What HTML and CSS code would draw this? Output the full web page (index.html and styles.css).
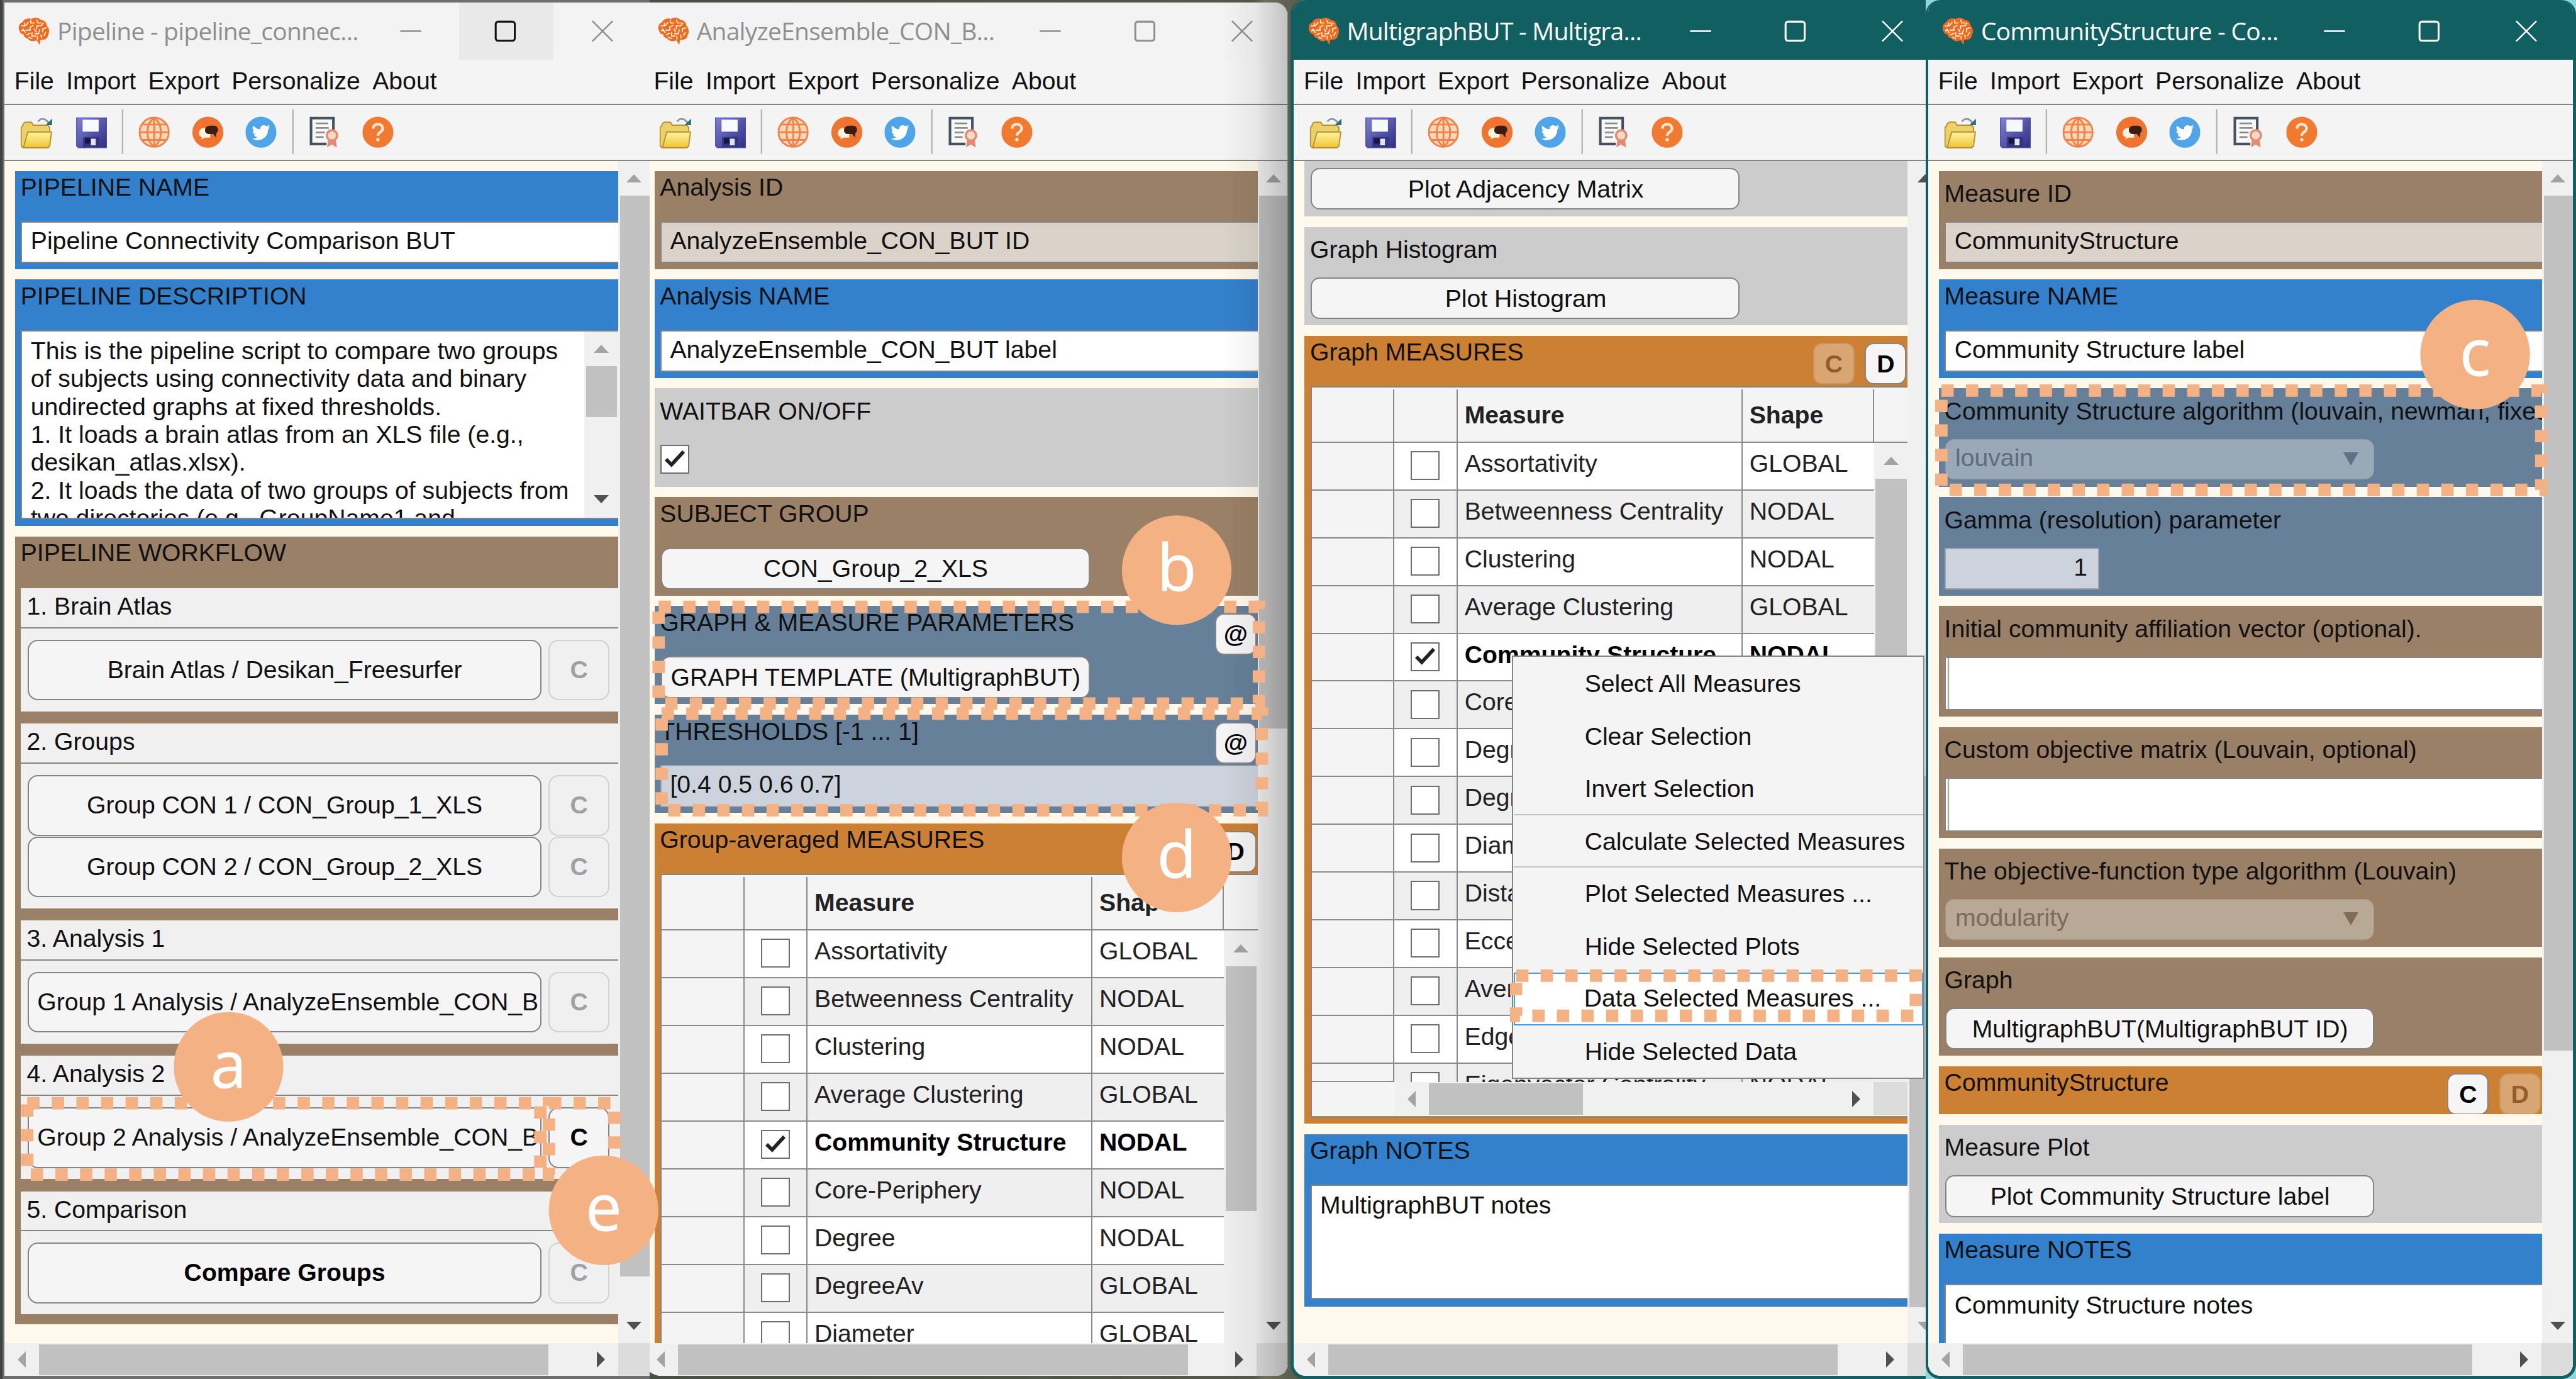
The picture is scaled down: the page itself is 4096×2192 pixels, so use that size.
FILE: index.html
```html
<!DOCTYPE html>
<html lang="en">
<head>
<meta charset="utf-8">
<title>BRAPH pipeline windows</title>
<link rel="stylesheet" href="styles.css">
</head>
<body>
<svg class="defs" width="0" height="0" aria-hidden="true">
  <defs>
    <linearGradient id="g-folder" x1="0" y1="0" x2="0" y2="1"><stop offset="0" stop-color="#fff3a0"/><stop offset="1" stop-color="#efc435"/></linearGradient>
    <linearGradient id="g-disk" x1="0" y1="0" x2="1" y2="1"><stop offset="0" stop-color="#7f7fd6"/><stop offset="1" stop-color="#2d2d84"/></linearGradient>
  </defs>
  <symbol id="i-brain" viewBox="0 0 52 46">
    <path fill="#f26a1b" d="M3 24C-1 18 1 10 7 8C9 2 17 0 22 2C28-1 35 0 38 4C44 4 48 9 48 14C52 17 53 25 50 29C50 34 45 38 40 37L37 38L36 46L31 38C25 41 18 39 16 35C11 34 9 31 9 28C6 28 4 27 3 24Z"/>
    <path fill="none" stroke="#fff" stroke-width="1.7" stroke-linecap="round" d="M5 14H11V9M13 13L17 8M21 4V9H27M25 13L20 16V21H13M8 19L12 25M31 4L33 9H39M42 9L38 14H31V19M27 19L30 24M47 17L41 19V24M36 20L34 27H28M46 25L43 30M38 29L39 34M14 29L20 26M23 25V31H29M18 33L23 35M32 31V36M6 22L9 21"/>
  </symbol>
  <symbol id="i-open" viewBox="0 0 52 52">
    <path fill="#ecd06a" stroke="#b8932c" stroke-width="2" d="M1 48V18L4 14L5 11L8 9H18L21 14H45L48 18V48L45 51H4Z"/>
    <path fill="url(#g-folder)" stroke="#b8932c" stroke-width="2" d="M5 50L12 25H51L48 48L45 51H6Z"/>
    <path fill="none" stroke="#8d93a8" stroke-width="3" d="M29 8C33 2 41 2 46 10"/>
    <path fill="#2f6f78" d="M52 3V14H41Z"/>
  </symbol>
  <symbol id="i-save" viewBox="0 0 52 52">
    <path fill="url(#g-disk)" stroke="#4a4aa6" stroke-width="1.5" d="M1 1H51V51H4L1 48Z"/>
    <path fill="#f7f9ff" d="M11 4H38V24H11Z"/>
    <path fill="#34347c" d="M12 33H39V50H12Z"/>
    <path fill="#dfe6fb" d="M25 36H33V47H25Z"/>
    <path fill="#15153f" d="M15 35H24V44H15Z"/>
  </symbol>
  <symbol id="i-web" viewBox="0 0 52 52">
    <circle cx="26" cy="26" r="24.5" fill="#fbd9b8" stroke="#f0834a" stroke-width="3"/>
    <path fill="none" stroke="#f0834a" stroke-width="3" d="M26 2V50M2 26H50M6 13H46M6 39H46M26 2C11 12 11 40 26 50M26 2C41 12 41 40 26 50"/>
  </symbol>
  <symbol id="i-forum" viewBox="0 0 52 52">
    <circle cx="26" cy="26" r="26" fill="#ee7430"/>
    <path fill="#fff3df" d="M19 19C9 20 9 33 16 34L15 38L21 35H30V20Z"/>
    <path fill="#3c1d10" d="M29 15C19 16 19 28 27 29H35L40 35V28C45 24 44 15 36 15Z"/>
  </symbol>
  <symbol id="i-bird" viewBox="0 0 52 52">
    <circle cx="26" cy="26" r="26" fill="#4fa5e8"/>
    <path fill="#fff" d="M41 17C40 18 39 18 37 18C39 17 40 16 40 14C38 15 37 15 35 16C31 12 24 15 25 21C20 21 16 18 13 15C11 18 12 22 15 24C14 24 13 24 12 23C12 27 14 29 17 30H14C15 33 17 34 20 34C18 36 14 37 11 37C22 43 38 37 38 21C39 20 40 19 41 17Z"/>
  </symbol>
  <symbol id="i-license" viewBox="0 0 52 54">
    <path fill="#f8f8f8" stroke="#44525f" stroke-width="4.5" d="M30 48H3V3H42V28"/>
    <path fill="none" stroke="#8d8d8d" stroke-width="3" d="M11 12H33M11 20H34M11 28H27M11 36H25"/>
    <path fill="#e58b72" d="M33 38L31 54L39 49L48 54L46 38Z"/>
    <circle cx="39.500" cy="33" r="9" fill="#f6d8c8" stroke="#e58b72" stroke-width="4"/>
  </symbol>
  <symbol id="i-help" viewBox="0 0 52 52">
    <circle cx="26" cy="26" r="26" fill="#f07a30"/>
    <path fill="none" stroke="#fde6d2" stroke-width="4.500" d="M18 20C18 10 34 10 34 20C34 26 26 25 26 32"/>
    <circle cx="26" cy="38.500" r="2.800" fill="#fde6d2"/>
  </symbol>
  <symbol id="i-controls" viewBox="0 0 400 96">
    <path fill="none" stroke="currentColor" stroke-width="2.600" d="M12 48H47M334 31L368 65M368 31L334 65"/>
    <rect x="172" y="32" width="32" height="32" rx="4" fill="none" stroke="var(--max, currentColor)" stroke-width="3.200"/>
  </symbol>
  <symbol id="i-tools" viewBox="0 0 700 92">
    <use href="#i-open" x="27" y="19" width="53" height="54"/>
    <use href="#i-save" x="120" y="20" width="52" height="53"/>
    <path stroke="#b4b4b4" stroke-width="2.500" d="M198 7V82M483.500 7V82"/>
    <use href="#i-web" x="225" y="19" width="52" height="53"/>
    <use href="#i-forum" x="315" y="19" width="52" height="53"/>
    <use href="#i-bird" x="404" y="19" width="52" height="53"/>
    <use href="#i-license" x="511" y="17" width="50" height="56"/>
    <use href="#i-help" x="600" y="19" width="52" height="53"/>
  </symbol>
  <symbol id="i-check" viewBox="0 0 48 48"><path fill="none" stroke="#222" stroke-width="6.500" d="M8 24L18 34L40 10"/></symbol>
</svg>

<main class="desktop">

  <section class="window win-pipeline">
    <div class="client">
      <header class="titlebar"><svg class="brain"><use href="#i-brain"/></svg><h1 class="title">Pipeline - pipeline_connec...</h1><svg class="controls"><use href="#i-controls"/></svg></header>
      <nav class="menubar"><span>File</span><span>Import</span><span>Export</span><span>Personalize</span><span>About</span></nav>
      <div class="toolbar"><svg class="tools"><use href="#i-tools"/></svg></div>
      <div class="view">
        <div class="content">
          <div class="panel blue"><div class="head">PIPELINE NAME</div><div class="field">Pipeline Connectivity Comparison BUT</div></div>
          <div class="panel blue panel-desc"><div class="head">PIPELINE DESCRIPTION</div>
            <div class="field area desc">
              <p class="desc-text">This is the pipeline script to compare two groups<br>of subjects using connectivity data and binary<br>undirected graphs at fixed thresholds.<br>1. It loads a brain atlas from an XLS file (e.g.,<br>desikan_atlas.xlsx).<br>2. It loads the data of two groups of subjects from<br>two directories (e.g., GroupName1 and</p>
              <div class="vscroll inner"><i class="up"></i><b class="thumb"></b><i class="down dark"></i></div>
            </div>
          </div>
          <div class="panel brown panel-flow"><div class="head">PIPELINE WORKFLOW</div>
            <div class="steps">
              <div class="step"><div class="step-name">1. Brain Atlas</div><div class="pair"><div class="btn">Brain Atlas / Desikan_Freesurfer</div><div class="btn mark off">C</div></div></div>
              <div class="step"><div class="step-name">2. Groups</div><div class="pair"><div class="btn">Group CON 1 / CON_Group_1_XLS</div><div class="btn mark off">C</div></div><div class="pair"><div class="btn">Group CON 2 / CON_Group_2_XLS</div><div class="btn mark off">C</div></div></div>
              <div class="step"><div class="step-name">3. Analysis 1</div><div class="pair"><div class="btn long">Group 1 Analysis / AnalyzeEnsemble_CON_B</div><div class="btn mark off">C</div></div></div>
              <div class="step"><div class="step-name">4. Analysis 2</div><div class="pair"><div class="btn long">Group 2 Analysis / AnalyzeEnsemble_CON_B</div><div class="btn mark">C</div></div></div>
              <div class="step"><div class="step-name">5. Comparison</div><div class="pair"><div class="btn strong">Compare Groups</div><div class="btn mark off">C</div></div></div>
            </div>
          </div>
        </div>
        <div class="vscroll"><i class="up"></i><b class="thumb"></b><i class="down dark"></i></div>
      </div>
      <div class="hscroll"><i class="left"></i><b class="thumb"></b><i class="right"></i><span class="corner"></span></div>
    </div>
  </section>

  <section class="window win-analysis">
    <div class="client">
      <header class="titlebar"><svg class="brain"><use href="#i-brain"/></svg><h1 class="title">AnalyzeEnsemble_CON_B...</h1><svg class="controls"><use href="#i-controls"/></svg></header>
      <nav class="menubar"><span>File</span><span>Import</span><span>Export</span><span>Personalize</span><span>About</span></nav>
      <div class="toolbar"><svg class="tools"><use href="#i-tools"/></svg></div>
      <div class="view">
        <div class="content">
          <div class="panel brown"><div class="head">Analysis ID</div><div class="field pale">AnalyzeEnsemble_CON_BUT ID</div></div>
          <div class="panel blue"><div class="head">Analysis NAME</div><div class="field">AnalyzeEnsemble_CON_BUT label</div></div>
          <div class="panel gray"><div class="head low">WAITBAR ON/OFF</div><div class="check wait"><svg><use href="#i-check"/></svg></div></div>
          <div class="panel brown"><div class="head">SUBJECT GROUP</div><div class="btn wide">CON_Group_2_XLS</div></div>
          <div class="panel slate"><div class="head">GRAPH &amp; MEASURE PARAMETERS<span class="btn mini">@</span></div><div class="btn wide">GRAPH TEMPLATE (MultigraphBUT)</div></div>
          <div class="panel slate"><div class="head">THRESHOLDS [-1 ... 1]<span class="btn mini">@</span></div><div class="field ice">[0.4 0.5 0.6 0.7]</div></div>
          <div class="panel orange panel-table"><div class="head">Group-averaged MEASURES<span class="btn mini">D</span></div>
            <div class="table">
              <div class="row thead"><span></span><span></span><span>Measure</span><span>Shape</span></div>
              <div class="tbody">
                <div class="rows">
                  <div class="row"><span></span><span><i class="check"></i></span><span>Assortativity</span><span>GLOBAL</span></div>
                  <div class="row"><span></span><span><i class="check"></i></span><span>Betweenness Centrality</span><span>NODAL</span></div>
                  <div class="row"><span></span><span><i class="check"></i></span><span>Clustering</span><span>NODAL</span></div>
                  <div class="row"><span></span><span><i class="check"></i></span><span>Average Clustering</span><span>GLOBAL</span></div>
                  <div class="row picked"><span></span><span><i class="check"><svg><use href="#i-check"/></svg></i></span><span>Community Structure</span><span>NODAL</span></div>
                  <div class="row"><span></span><span><i class="check"></i></span><span>Core-Periphery</span><span>NODAL</span></div>
                  <div class="row"><span></span><span><i class="check"></i></span><span>Degree</span><span>NODAL</span></div>
                  <div class="row"><span></span><span><i class="check"></i></span><span>DegreeAv</span><span>GLOBAL</span></div>
                  <div class="row"><span></span><span><i class="check"></i></span><span>Diameter</span><span>GLOBAL</span></div>
                </div>
                <div class="vscroll inner"><i class="up"></i><b class="thumb"></b></div>
              </div>
            </div>
          </div>
        </div>
        <div class="vscroll"><i class="up"></i><b class="thumb"></b><i class="down dark"></i></div>
      </div>
      <div class="hscroll"><i class="left"></i><b class="thumb"></b><i class="right"></i><span class="corner"></span></div>
    </div>
    <div class="edge-shade"></div>
  </section>

  <section class="window active win-graph">
    <div class="client">
      <header class="titlebar"><svg class="brain"><use href="#i-brain"/></svg><h1 class="title">MultigraphBUT - Multigra...</h1><svg class="controls"><use href="#i-controls"/></svg></header>
      <nav class="menubar"><span>File</span><span>Import</span><span>Export</span><span>Personalize</span><span>About</span></nav>
      <div class="toolbar"><svg class="tools"><use href="#i-tools"/></svg></div>
      <div class="view">
        <div class="content scrolled">
          <div class="panel gray panel-cut"><div class="btn wide">Plot Adjacency Matrix</div></div>
          <div class="panel gray"><div class="head low">Graph Histogram</div><div class="btn wide">Plot Histogram</div></div>
          <div class="panel orange panel-table"><div class="head">Graph MEASURES<span class="btn mini off">C</span><span class="btn mini">D</span></div>
            <div class="table">
              <div class="row thead"><span></span><span></span><span>Measure</span><span>Shape</span></div>
              <div class="tbody">
                <div class="rows">
                  <div class="row"><span></span><span><i class="check"></i></span><span>Assortativity</span><span>GLOBAL</span></div>
                  <div class="row"><span></span><span><i class="check"></i></span><span>Betweenness Centrality</span><span>NODAL</span></div>
                  <div class="row"><span></span><span><i class="check"></i></span><span>Clustering</span><span>NODAL</span></div>
                  <div class="row"><span></span><span><i class="check"></i></span><span>Average Clustering</span><span>GLOBAL</span></div>
                  <div class="row picked"><span></span><span><i class="check"><svg><use href="#i-check"/></svg></i></span><span>Community Structure</span><span>NODAL</span></div>
                  <div class="row"><span></span><span><i class="check"></i></span><span>Core-Periphery</span><span></span></div>
                  <div class="row"><span></span><span><i class="check"></i></span><span>Degree</span><span></span></div>
                  <div class="row"><span></span><span><i class="check"></i></span><span>DegreeAv</span><span></span></div>
                  <div class="row"><span></span><span><i class="check"></i></span><span>Diameter</span><span></span></div>
                  <div class="row"><span></span><span><i class="check"></i></span><span>Distance</span><span></span></div>
                  <div class="row"><span></span><span><i class="check"></i></span><span>Eccentricity</span><span></span></div>
                  <div class="row"><span></span><span><i class="check"></i></span><span>Average</span><span></span></div>
                  <div class="row"><span></span><span><i class="check"></i></span><span>Edge</span><span></span></div>
                  <div class="row"><span></span><span><i class="check"></i></span><span>Eigenvector Centrality</span><span>NODAL</span></div>
                </div>
                <div class="vscroll inner"><i class="up"></i><b class="thumb"></b></div>
              </div>
              <div class="tfoot"><span class="blank"></span><i class="left"></i><b class="thumb"></b><i class="right"></i><span class="corner"></span></div>
            </div>
          </div>
          <div class="panel blue panel-gnotes"><div class="head">Graph NOTES</div><div class="field area">MultigraphBUT notes</div></div>
        </div>
        <div class="vscroll"><i class="up dark"></i><b class="thumb"></b><i class="down"></i></div>
      </div>
      <div class="hscroll"><i class="left"></i><b class="thumb"></b><i class="right"></i><span class="corner"></span></div>
    </div>
  </section>

  <section class="window active win-measure">
    <div class="client">
      <header class="titlebar"><svg class="brain"><use href="#i-brain"/></svg><h1 class="title">CommunityStructure - Co...</h1><svg class="controls"><use href="#i-controls"/></svg></header>
      <nav class="menubar"><span>File</span><span>Import</span><span>Export</span><span>Personalize</span><span>About</span></nav>
      <div class="toolbar"><svg class="tools"><use href="#i-tools"/></svg></div>
      <div class="view">
        <div class="content">
          <div class="panel brown"><div class="head low">Measure ID</div><div class="field pale">CommunityStructure</div></div>
          <div class="panel blue"><div class="head">Measure NAME</div><div class="field">Community Structure label</div></div>
          <div class="panel slate"><div class="head low">Community Structure algorithm (louvain, newman, fixed)</div><div class="drop">louvain<i class="down"></i></div></div>
          <div class="panel slate"><div class="head low">Gamma (resolution) parameter</div><div class="field ice number">1</div></div>
          <div class="panel brown panel-vector"><div class="head low">Initial community affiliation vector (optional).</div><div class="field vector"></div></div>
          <div class="panel brown panel-vector"><div class="head low">Custom objective matrix (Louvain, optional)</div><div class="field vector"></div></div>
          <div class="panel brown"><div class="head low">The objective-function type algorithm (Louvain)</div><div class="drop tan">modularity<i class="down"></i></div></div>
          <div class="panel brown"><div class="head low">Graph</div><div class="btn wide">MultigraphBUT(MultigraphBUT ID)</div></div>
          <div class="panel orange panel-bar"><div class="head">CommunityStructure<span class="btn mini">C</span><span class="btn mini off">D</span></div></div>
          <div class="panel gray"><div class="head low">Measure Plot</div><div class="btn wide">Plot Community Structure label</div></div>
          <div class="panel blue panel-mnotes"><div class="head">Measure NOTES</div><div class="field area">Community Structure notes</div></div>
        </div>
        <div class="vscroll"><i class="up"></i><b class="thumb"></b><i class="down dark"></i></div>
      </div>
      <div class="hscroll"><i class="left"></i><b class="thumb"></b><i class="right"></i><span class="corner"></span></div>
    </div>
  </section>

  <div class="context-menu">
    <div>Select All Measures</div><div>Clear Selection</div><div class="sep">Invert Selection</div><div class="sep">Calculate Selected Measures</div><div>Plot Selected Measures ...</div><div>Hide Selected Plots</div><div class="hover">Data Selected Measures ...</div><div>Hide Selected Data</div>
  </div>

  <svg class="notes" viewBox="0 0 4317 2310">
    <g class="dash">
      <rect x="45.600" y="1848.300" width="860" height="119.500"/>
      <rect x="920" y="1848.300" width="109.500" height="119.500"/>
      <rect x="1103.800" y="1016.600" width="1006" height="162"/>
      <rect x="1108.800" y="1195.500" width="1006" height="162"/>
      <rect x="2540.800" y="1634.500" width="670" height="67.300"/>
      <rect x="3253.500" y="654.500" width="1005.300" height="166.200"/>
    </g>
    <g class="badge">
      <circle cx="383" cy="1787.300" r="91.800"/><text x="383" y="1822.500">a</text>
      <circle cx="1972" cy="955.300" r="91.800"/><text x="1972" y="989.500">b</text>
      <circle cx="4148" cy="594" r="91.800"/><text x="4148" y="629">c</text>
      <circle cx="1972" cy="1436.600" r="91.800"/><text x="1972" y="1470.500">d</text>
      <circle cx="1011.500" cy="2027.600" r="91.800"/><text x="1011.500" y="2062">e</text>
    </g>
  </svg>
</main>
</body>
</html>
```
FILE: styles.css
```css
* { box-sizing: border-box; }
html { overflow: hidden; background: #2e3530; }
body {
  margin: 0;
  width: 4317px;
  height: 2310px;
  overflow: hidden;
  zoom: 0.9488;
  font: 41.3px "Liberation Sans", Arial, sans-serif;
  color: #111;
  white-space: nowrap;
}
.defs { position: absolute; }
h1, p { margin: 0; font: inherit; }

.desktop {
  position: relative;
  display: flex;
  width: 4317px;
  height: 2310px;
  overflow: hidden;
  padding-left: 7px;
  background: linear-gradient(90deg, #3d4540 0, #55574a 2100px, #6f6f5c 2120px, #4d5145 2200px, #4d5145 3220px, #8fd6da 3220px);
}

/* Windows */
.window { position: relative; flex: none; height: 2310px; overflow: hidden; }
.client { display: flex; flex-direction: column; width: 1082px; height: 2305px; background: #f4f4f4; }
.win-pipeline { width: 1082px; padding-top: 4px; background: #6e6e6e; box-shadow: -3px 0 0 #6e6e6e; --max: #111; --thumb: 1811px; }
.win-pipeline .client, .win-analysis .client { height: 2301px; }
.win-analysis { width: 1070px; padding-top: 4px; margin-right: 4px; --thumb: 893px; }
.win-analysis .client { width: 1080.5px; margin-left: -10.5px; border-radius: 0 22px 20px 30px; overflow: hidden; }
.active { background: #125f61; color: #111; }
.win-graph { width: 1064px; padding-left: 5px; --thumb: 890px; border-radius: 24px 0 0 24px; }
.win-graph .client { border-radius: 20px 0 0 20px; overflow: hidden; }
.win-measure { width: 1090px; padding: 0 5px 0 4px; border-radius: 24px; --thumb: 1432px; }
.win-measure .client { width: 1081px; border-radius: 20px; overflow: hidden; }

.titlebar { display: flex; align-items: center; flex: none; height: 96px; background: #f3f3f3; color: #8f8f8f; }
.active .titlebar { height: 100px; padding-top: 4px; background: #125f61; color: #fff; }
.brain { width: 52px; height: 46px; margin-left: 24px; margin-right: 13px; }
.title { width: 552px; font: 41px "Open Sans", "Noto Sans", sans-serif; letter-spacing: -0.75px; line-height: 60px; }
.controls { width: 400px; height: 96px; flex: none; margin-left: 11px; }
.win-pipeline .controls { background: linear-gradient(90deg, transparent 111px, #e9e9e9 111px 269px, transparent 269px); }
.menubar { display: flex; flex: none; gap: 20.4px; height: 76.500px; padding-left: 17px; line-height: 72px; border-bottom: 2.6px solid #848484; }
.toolbar { flex: none; height: 93.500px; border-bottom: 2.600px solid #848484; }
.tools { display: block; width: 700px; height: 92px; }

.view { display: flex; flex: none; height: 1980px; background: #fff8ec; }
.content { display: flex; flex-direction: column; gap: 17.7px; flex: none; width: 1029px; height: 1980px; padding: 16.200px 0 0 18.300px; overflow: hidden; }
.content.scrolled { padding-top: 0; }

/* Scroll bars */
.vscroll { display: flex; flex-direction: column; flex: none; width: 53px; background: #f0f0f0; }
.vscroll .thumb { margin-left: 3px; width: 50px; height: var(--thumb); background: #c1c1c1; }
.vscroll .down { margin-top: auto; }
.up, .down { flex: none; display: flex; height: 58px; align-items: center; justify-content: center; color: #a3a3a3; }
.left, .right { flex: none; display: flex; width: 58px; align-items: center; justify-content: center; color: #a3a3a3; }
.up::before { content: ""; border: 13px solid transparent; border-top: 0; border-bottom: 14px solid currentColor; }
.down::before { content: ""; border: 13px solid transparent; border-bottom: 0; border-top: 14px solid currentColor; }
.left::before { content: ""; border: 14px solid transparent; border-left: 0; border-right: 14px solid currentColor; }
.right::before { content: ""; border: 14px solid transparent; border-right: 0; border-left: 14px solid currentColor; }
.dark, .right { color: #505050; }
.win-graph .view > .vscroll .up { width: 58px; }
.win-graph .view > .vscroll .down { width: 58px; }
.win-graph .view > .vscroll .thumb { margin-top: 972px; }
.hscroll { display: flex; flex: none; height: 55px; background: #f0f0f0; }
.hscroll .thumb { width: 854px; margin: 2px 0 1px; background: #c1c1c1; }
.hscroll .right { margin-left: auto; }
.corner { flex: none; width: 53px; background: #dcdcdc; }
.inner { width: 57px; }
.inner .thumb { width: 52px; }

/* Property panels */
.panel { flex: none; height: 164.600px; overflow: hidden; }
.blue { background: #3380cc; }
.brown { background: #998066; }
.gray { background: #cccccc; }
.orange { background: #cc8033; }
.slate { background: #668099; }
.head { display: flex; height: 84.500px; padding: 4.500px 0 0 9.200px; line-height: 46.700px; }
.head.low { padding-top: 15px; }
.field { height: 70px; margin-left: 10px; padding-left: 14px; line-height: 62px; background: #fff; border: 2.600px solid #858585; border-right: 0; }
.pale { background: #dbd3ca; }
.ice { background: #ccd3dc; border-color: #9aa3ad; }
.area { line-height: 46.700px; padding-top: 10px; white-space: normal; overflow: hidden; }
.number { width: 259px; padding-right: 18px; text-align: right; border-right: 2.600px solid #9aa3ad; }
.btn { display: flex; flex: none; align-items: center; justify-content: center; background: #f5f5f5; border: 2.600px solid #858585; border-radius: 15px; overflow: hidden; }
.wide { width: 719px; height: 70px; margin-left: 10.500px; padding: 1.500px 0 0 1.500px; }
.mark { font-weight: bold; color: #000; }
.mini { width: 69.500px; height: 69.500px; margin: 7.500px 2px 0 0; padding-top: 2px; font-weight: bold; color: #000; }
.mini:first-of-type { margin-left: auto; }
.mini + .mini { margin-left: 15.500px; }
.mini.off { background: #d9a673; border-color: #c8935f; color: #905c28; }
.drop { display: flex; justify-content: space-between; width: 719px; height: 68px; margin-left: 10.500px; padding-left: 16px; padding-right: 12px; line-height: 62px; border-radius: 15px; background: #99a9b8; border: 2px solid #8c9dae; color: #5d6d7d; }
.drop .down { width: 52px; height: 65px; color: #5f7183; }
.drop .down::before { border-top-width: 23px; }
.drop.tan { background: #b8a896; border-color: #a8967f; color: #7b6b5b; }
.drop.tan .down { color: #7f6c58; }
.check { display: block; width: 48.500px; height: 48.500px; background: #fff; border: 2.600px solid #6e6e6e; }
.check svg { display: block; width: 100%; height: 100%; }
.wait { margin: 10px 0 0 10px; }

.panel-desc { height: 413px; }
.desc { display: flex; height: 317px; padding-top: 0; }
.desc-text { width: 927px; height: 312px; overflow: hidden; padding-top: 10px; line-height: 46.700px; }
.desc .vscroll { margin-left: auto; --thumb: 86px; }
.desc .down { height: 62px; margin-bottom: 0; }
.desc .vscroll { height: 312px; }
.panel-flow { height: 1319px; }
.steps { display: flex; flex-direction: column; gap: 20.500px; margin: 2px 0 0 9px; }
.step { height: 206.400px; background: #f0f0f0; }
.step:nth-child(2) { height: 309px; }
.step-name { height: 67px; margin-bottom: 19px; padding-left: 10.500px; line-height: 62px; border-bottom: 2.600px solid #858585; }
.pair { display: flex; gap: 11.500px; height: 102px; margin-left: 12px; margin-bottom: 1px; }
.pair .btn { width: 861.500px; border-radius: 17px; padding-bottom: 1px; }
.pair .mark { width: 102px; }
.pair .long { justify-content: flex-start; padding-left: 14px; }
.pair .off { background: #f0f0f0; border-color: #d2d2d2; color: #a0a0a0; }
.strong { font-weight: bold; color: #000; }

.panel-vector { height: 185.500px; }
.vector { height: 90px; border-left: 2.600px solid #858585; box-shadow: inset 3px 0 0 #fff, inset 5.500px 0 0 #a5a5a5; }
.panel-bar { height: 80.700px; }
.panel-mnotes { height: 200px; }
.panel-mnotes .area { height: 130px; }
.panel-cut { height: 92.700px; padding-top: 11.500px; }
.panel-gnotes { height: 289px; }
.panel-gnotes .area { height: 192px; }

/* Measure tables */
.win-analysis .panel-table { height: 900px; }
.win-graph .panel-table { height: 1319.500px; }
.table { margin-left: 10px; border-top: 2.600px solid #858585; border-left: 2.600px solid #858585; color: #222; }
.win-graph .table { height: 1226px; border-bottom: 2.600px solid #858585; }
.row { display: grid; grid-template-columns: 138.500px 106px 477.500px 220px; height: 80.050px; line-height: 69px; border-bottom: 2.600px solid #8a8a8a; background: #fff; }
.row span { padding-left: 11.500px; border-right: 2.600px solid #8a8a8a; }
.row span:first-child { background: #f4f4f4; }
.row:nth-child(even) { background: #efefef; }
.row .check { margin: 14px 0 0 16px; }
.row.thead { height: 92.500px; line-height: 86px; font-weight: bold; background: #f4f4f4; padding-top: 3px; }
.tbody { display: flex; }
.rows { flex: none; width: 942px; }
.rows .row span:last-child { border-right: 0; }
.win-analysis .rows { height: 720px; }
.win-graph .rows { height: 1071.500px; overflow: hidden; }
.win-graph .rows .row:last-child span:first-child { height: 31px; border-bottom: 2.600px solid #8a8a8a; }
.picked span:nth-child(n+3) { font-weight: bold; color: #000; }
.tbody .vscroll { --thumb: 410px; }
.tbody .up { height: 60px; }
.tfoot { display: flex; height: 57px; background: #f0f0f0; border-bottom: 2px solid #fff; }
.tfoot .blank { flex: none; width: 138.500px; background: #f4f4f4; }
.tfoot .left { width: 85px; }
.tfoot .thumb { width: 258px; margin: 2px 0; background: #c1c1c1; }
.tfoot .right { width: 59px; margin-left: auto; }
.tfoot .corner { width: 57px; }
.tfoot .left { width: 58px; }

.edge-shade { position: absolute; top: 4px; right: 0; width: 110px; height: 2301px; background: linear-gradient(90deg, transparent, rgba(0, 0, 0, .05) 50%, rgba(0, 0, 0, .2)); border-radius: 0 22px 20px 0; border-right: 2px solid #777; }

/* Popup and call-outs */
.context-menu { position: absolute; left: 2533.500px; top: 1098.500px; width: 691.500px; height: 709.500px; padding: 1px 0 0 1px; background: #f4f4f4; border: 2.600px solid #858585; }
.context-menu div { height: 88px; padding-left: 119px; line-height: 88px; border: 0 solid #c4c4c4; }
.context-menu .sep { border-bottom-width: 2.600px; }
.context-menu .hover { padding-left: 116px; line-height: 83px; background: #fff; border: 3px solid #429ce3; }
.notes { position: absolute; left: 0; top: 0; width: 4317px; height: 2310px; }
.dash rect { fill: none; stroke: #f4b183; stroke-width: 20.800px; stroke-dasharray: 20.600px 20.600px; }
.badge circle { fill: #f4b183; }
.badge text { fill: #fff; stroke: #fff; stroke-width: 1px; font: 108px "Open Sans", "Noto Sans", sans-serif; text-anchor: middle; }
```
